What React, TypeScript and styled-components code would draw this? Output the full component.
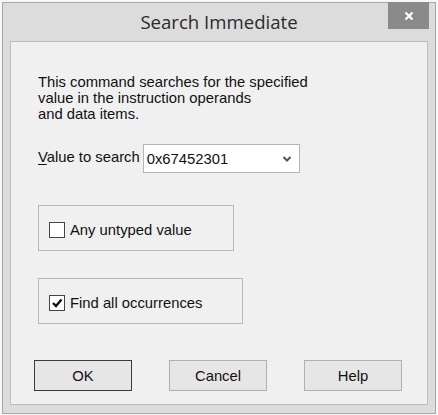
import React from "react";
import styled, { createGlobalStyle } from "styled-components";

const Global = createGlobalStyle`
  html, body { margin: 0; padding: 0; background: #f7f7f7; }
  body { width: 438px; height: 415px; overflow: hidden; }
`;

const Window = styled.div`
  position: relative;
  margin: 2px 0 0 2px;
  width: 434px;
  height: 412px;
  box-sizing: border-box;
  border: 1px solid #a8a8a8;
  background: #dcdcdc;
  display: flex;
  flex-direction: column;
  padding: 0 7px 8px 7px;
`;

const TitleBar = styled.div`
  height: 38px;
  display: flex;
  align-items: center;
  justify-content: center;
  font-family: "Open Sans", "Noto Sans", sans-serif;
  font-size: 18.6px;
  color: #2b2b2b;
  padding-bottom: 1px;
  box-sizing: border-box;
`;

const CloseButton = styled.div`
  position: absolute;
  top: -1px;
  right: 6px;
  width: 41px;
  height: 27px;
  background: #8a8a8a;
  display: flex;
  align-items: center;
  justify-content: center;
`;

const Client = styled.div`
  flex: 1;
  border: 1px solid #bdbdbd;
  background: #f0f0f0;
  display: flex;
  flex-direction: column;
  padding: 32px 0 0 27px;
  font-family: "Liberation Sans", Arial, sans-serif;
  font-size: 14.8px;
  color: #111;
`;

const Description = styled.div`
  line-height: 16px;
`;

const ValueRow = styled.div`
  display: flex;
  align-items: center;
  gap: 3px;
  margin-top: 22px;
`;

const Label = styled.span`
  margin-top: -3px;
  u { text-decoration: underline; text-underline-offset: 2px; }
`;

const Combo = styled.div`
  width: 157px;
  height: 29px;
  box-sizing: border-box;
  border: 1px solid #b5b5b5;
  background: #fff;
  display: flex;
  align-items: center;
  justify-content: space-between;
  padding: 0 7px 0 3px;
`;

const Group = styled.div<{ $w: number; $mt: number }>`
  width: ${(p) => p.$w}px;
  height: 46px;
  margin-top: ${(p) => p.$mt}px;
  box-sizing: border-box;
  border: 1px solid #b8b8b8;
  display: flex;
  align-items: center;
  padding: 3px 0 0 10px;
  gap: 5px;
`;

const Box = styled.div`
  width: 16px;
  height: 16px;
  box-sizing: border-box;
  border: 1px solid #444;
  background: #fff;
  display: flex;
  align-items: center;
  justify-content: center;
`;

const ButtonRow = styled.div`
  display: flex;
  gap: 37px;
  margin-top: 36px;
  margin-left: -4px;
`;

const Button = styled.div<{ $default?: boolean }>`
  width: 98px;
  height: 31px;
  box-sizing: border-box;
  border: 1px solid ${(p) => (p.$default ? "#3a3a3a" : "#b0b0b0")};
  background: #e6e6e6;
  display: flex;
  align-items: center;
  justify-content: center;
  font-size: 14.8px;
`;

export default function App() {
  return (
    <>
      <Global />
      <Window>
        <TitleBar>Search Immediate</TitleBar>
        <CloseButton>
          <svg width="12" height="12" viewBox="0 0 12 12">
            <path d="M2.5 2.5 L9.5 9.5 M9.5 2.5 L2.5 9.5" stroke="#fff" strokeWidth="2.2" />
          </svg>
        </CloseButton>
        <Client>
          <Description>
            This command searches for the specified
            <br />
            value in the instruction operands
            <br />
            and data items.
          </Description>
          <ValueRow>
            <Label>
              <u>V</u>alue to search
            </Label>
            <Combo>
              <span>0x67452301</span>
              <svg width="10" height="8" viewBox="0 0 10 8">
                <path d="M1.5 2 L5 5.5 L8.5 2" stroke="#555" strokeWidth="2" fill="none" />
              </svg>
            </Combo>
          </ValueRow>
          <Group $w={196} $mt={32}>
            <Box />
            <span>Any untyped value</span>
          </Group>
          <Group $w={205} $mt={27}>
            <Box>
              <svg width="12" height="12" viewBox="0 0 12 12">
                <path d="M2 6 L5 9 L10.5 2.5" stroke="#111" strokeWidth="2.4" fill="none" />
              </svg>
            </Box>
            <span>Find all occurrences</span>
          </Group>
          <ButtonRow>
            <Button $default>OK</Button>
            <Button>Cancel</Button>
            <Button>Help</Button>
          </ButtonRow>
        </Client>
      </Window>
    </>
  );
}
